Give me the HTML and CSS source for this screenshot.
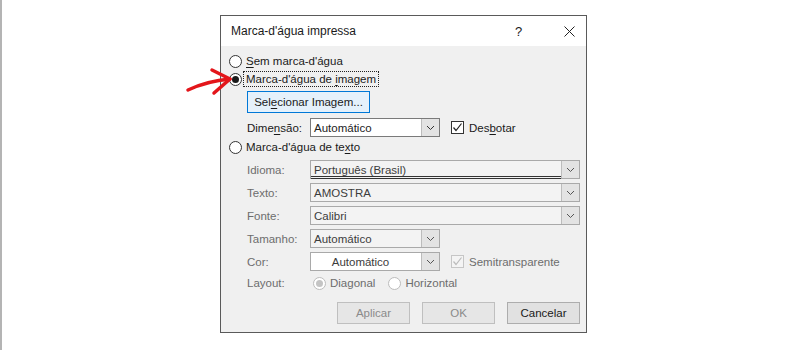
FILE: index.html
```html
<!DOCTYPE html>
<html lang="pt-BR">

<head>
    <meta charset="UTF-8">
    <title>Marca-d'água impressa</title>
    <link rel="stylesheet" href="styles.css">
</head>

<body>
    <div class="page">
        <div class="dialog">
            <div class="titlebar">
                <span class="title">Marca-d'água impressa</span>
                <span class="help">?</span>
                <span class="close">
                    <svg width="11" height="11" viewBox="0 0 11 11"><path d="M0.5 0.5 L10.5 10.5 M10.5 0.5 L0.5 10.5" stroke="#222" stroke-width="1" fill="none"/></svg>
                </span>
            </div>

            <div class="content">
                <div class="radio-row r1">
                    <span class="radio"></span>
                    <span class="rtext"><u>S</u>em marca-d'água</span>
                </div>
                <div class="radio-row r2">
                    <span class="radio checked"></span>
                    <span class="rtext focus">Marca-d'água de <u>i</u>magem</span>
                </div>

                <div class="indent">
                    <button class="btn default">Sel<u>e</u>cionar Imagem...</button>
                </div>

                <div class="field-row dim">
                    <label class="lbl">Dime<u>n</u>são:</label>
                    <div class="combo small">
                        <span class="ctext">Automático</span>
                        <span class="arrow"><svg width="9" height="6" viewBox="0 0 9 6"><path d="M1 1 L4.5 4.5 L8 1" stroke="#333" fill="none"/></svg></span>
                    </div>
                    <span class="check"><svg width="11" height="11" viewBox="0 0 11 11"><path d="M1.5 5.5 L4 8.5 L9.5 1.5" stroke="#222" stroke-width="1.2" fill="none"/></svg></span>
                    <span class="ctlabel">Des<u>b</u>otar</span>
                </div>

                <div class="radio-row r3">
                    <span class="radio"></span>
                    <span class="rtext">Marca-d'água de te<u>x</u>to</span>
                </div>

                <div class="field-row off">
                    <label class="lbl">Idioma:</label>
                    <div class="combo wide">
                        <span class="ctext dbl">Português (Brasil)</span>
                        <span class="arrow"><svg width="9" height="6" viewBox="0 0 9 6"><path d="M1 1 L4.5 4.5 L8 1" stroke="#555" fill="none"/></svg></span>
                    </div>
                </div>
                <div class="field-row off">
                    <label class="lbl">Texto:</label>
                    <div class="combo wide">
                        <span class="ctext">AMOSTRA</span>
                        <span class="arrow"><svg width="9" height="6" viewBox="0 0 9 6"><path d="M1 1 L4.5 4.5 L8 1" stroke="#555" fill="none"/></svg></span>
                    </div>
                </div>
                <div class="field-row off">
                    <label class="lbl">Fonte:</label>
                    <div class="combo wide">
                        <span class="ctext">Calibri</span>
                        <span class="arrow"><svg width="9" height="6" viewBox="0 0 9 6"><path d="M1 1 L4.5 4.5 L8 1" stroke="#555" fill="none"/></svg></span>
                    </div>
                </div>
                <div class="field-row off">
                    <label class="lbl">Tamanho:</label>
                    <div class="combo small">
                        <span class="ctext">Automático</span>
                        <span class="arrow"><svg width="9" height="6" viewBox="0 0 9 6"><path d="M1 1 L4.5 4.5 L8 1" stroke="#555" fill="none"/></svg></span>
                    </div>
                </div>
                <div class="field-row off">
                    <label class="lbl">Cor:</label>
                    <div class="combo small white">
                        <span class="ctext center">Automático</span>
                        <span class="arrow"><svg width="9" height="6" viewBox="0 0 9 6"><path d="M1 1 L4.5 4.5 L8 1" stroke="#555" fill="none"/></svg></span>
                    </div>
                    <span class="check dis"><svg width="11" height="11" viewBox="0 0 11 11"><path d="M1.5 5.5 L4 8.5 L9.5 1.5" stroke="#bbb" stroke-width="1.2" fill="none"/></svg></span>
                    <span class="ctlabel">Semitransparente</span>
                </div>
                <div class="field-row off layout">
                    <label class="lbl">Layout:</label>
                    <span class="radio dis checked"></span>
                    <span class="rtext">Diagonal</span>
                    <span class="radio dis gap"></span>
                    <span class="rtext">Horizontal</span>
                </div>

                <div class="buttons">
                    <button class="btn off">Aplicar</button>
                    <button class="btn off">OK</button>
                    <button class="btn">Cancelar</button>
                </div>
            </div>
        </div>

        <!-- seta vermelha desenhada por cima -->
        <svg class="pointer" width="50" height="34" viewBox="0 0 50 34">
            <path d="M3 24 Q 22 15 45 13" stroke="#e3161b" stroke-width="3.5" fill="none" stroke-linecap="round"/>
            <path d="M27 4 L45 13 L29 27" stroke="#e3161b" stroke-width="3.5" fill="none" stroke-linecap="round" stroke-linejoin="round"/>
        </svg>
    </div>
</body>

</html>
```

FILE: styles.css
```css
body {
    margin: 0;
    background-color: #fff;
    font-family: "Liberation Sans", Arial, sans-serif;
    font-size: 11.5px;
    color: #1a1a1a;
}

.page {
    position: relative;
    height: 350px;
    box-sizing: border-box;
    border-left: 2px solid #b4b4b4;
    padding: 15px 0 0 218px;
}

.dialog {
    width: 365px;
    border: 1px solid #5a5a5a;
    background-color: #f0f0f0;
}

.titlebar {
    height: 30px;
    background-color: #fff;
    display: flex;
    align-items: center;
}

.title {
    padding-left: 10px;
    flex: 1;
    font-size: 12px;
}

.help {
    width: 20px;
    font-size: 13px;
    margin-right: 29px;
}

.close {
    width: 22px;
    display: flex;
    align-items: center;
}

.content {
    padding: 6px 6px 8px 8px;
}

u {
    text-decoration: underline;
    text-underline-offset: 2px;
}

.radio-row {
    display: flex;
    align-items: center;
    height: 18px;
}

.r3 {
    margin-top: 1px;
}

.radio {
    width: 11px;
    height: 11px;
    border: 1px solid #333;
    border-radius: 50%;
    background-color: #fff;
    position: relative;
    flex: none;
}

.radio.checked::after {
    content: "";
    position: absolute;
    left: 2px;
    top: 2px;
    width: 7px;
    height: 7px;
    border-radius: 50%;
    background-color: #1a1a1a;
}

.radio.dis {
    border-color: #bcbcbc;
    background-color: #fff;
}

.radio.dis.checked::after {
    background-color: #c4c4c4;
}

.rtext {
    margin-left: 1px;
    padding: 1px 2px;
    border: 1px solid transparent;
}

.focus {
    border: 1px dotted #222;
}

.indent {
    padding-left: 18px;
    margin-top: 3px;
}

.btn {
    font-family: "Liberation Sans", Arial, sans-serif;
    font-size: 11.5px;
    height: 22px;
    background-color: #e1e1e1;
    border: 1px solid #adadad;
    color: #1a1a1a;
    padding: 0;
}

.btn.default {
    width: 123px;
    border: 1px solid #0078d7;
    background-color: #e5f1fb;
}

.btn.off {
    color: #8a8a8a;
    background-color: #e6e6e6;
    border-color: #bfbfbf;
}

.field-row {
    display: flex;
    align-items: center;
    height: 19px;
    margin-top: 4px;
    padding-left: 18px;
}

.dim {
    margin-top: 5px;
}

.lbl {
    width: 63px;
    flex: none;
}

.off .lbl,
.off .rtext,
.off .ctlabel {
    color: #6d6d6d;
}

.combo {
    height: 19px;
    box-sizing: border-box;
    border: 1px solid #7a7a7a;
    background-color: #fff;
    display: flex;
    align-items: center;
}

.combo.small {
    width: 130px;
}

.combo.wide {
    width: 270px;
}

.off .combo {
    border-color: #a9a9a9;
    background-color: #f3f3f3;
}

.off .combo.white {
    background-color: #fff;
}

.ctext {
    flex: 1;
    padding-left: 3px;
    color: #222;
}

.off .ctext {
    color: #3c3c3c;
}

.ctext.center {
    text-align: center;
    padding-right: 14px;
}

.ctext.dbl {
    border-bottom: 3px double #333;
    margin-top: 3px;
    line-height: 12px;
}

.arrow {
    width: 17px;
    height: 17px;
    border-left: 1px solid #bcbcbc;
    background-color: #e3e3e3;
    display: flex;
    align-items: center;
    justify-content: center;
}

.check {
    width: 11px;
    height: 11px;
    border: 1px solid #333;
    background-color: #fff;
    margin-left: 11px;
    display: flex;
}

.check.dis {
    border-color: #c6c6c6;
    background-color: #f4f4f4;
}

.ctlabel {
    margin-left: 5px;
}

.layout {
    height: 18px;
    margin-top: 3px;
}

.layout .radio {
    margin-left: 3px;
}

.layout .radio.gap {
    margin-left: 10px;
}

.buttons {
    display: flex;
    justify-content: flex-end;
    gap: 12px;
    margin-top: 10px;
}

.buttons .btn {
    width: 73px;
}

.pointer {
    position: absolute;
    left: 183px;
    top: 66px;
}
```
